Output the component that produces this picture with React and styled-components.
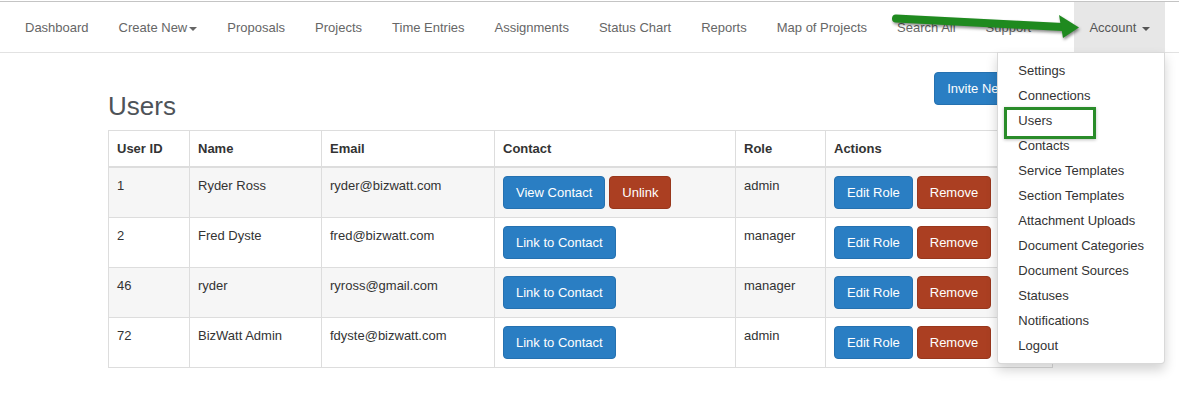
import React from "react";
import styled, { createGlobalStyle, css } from "styled-components";

const Global = createGlobalStyle`
  html, body { margin: 0; padding: 0; background: #fff; }
  body {
    font-family: "Liberation Sans", Arial, sans-serif;
    font-size: 13px;
    line-height: 1.42857;
    color: #333;
  }
  * { box-sizing: border-box; }
`;

const Page = styled.div`
  position: relative;
  width: 1179px;
  height: 396px;
  overflow: hidden;
`;

const Navbar = styled.nav`
  margin-top: 1px;
  border-top: 1px solid #c4c4c4;
  border-bottom: 1px solid #e2e2e2;
  height: 52px;
  display: flex;
  justify-content: space-between;
  background: #fff;
  position: relative;
  z-index: 5;
`;

const NavList = styled.ul`
  list-style: none;
  margin: 0;
  padding: 0;
  display: flex;
  margin-left: ${(p) => (p.$right ? "0" : "10px")};
  margin-right: ${(p) => (p.$right ? "14px" : "0")};
`;

const NavItem = styled.li`
  position: relative;
  background: ${(p) => (p.$open ? "#e7e7e7" : "transparent")};
`;

const NavLink = styled.a`
  display: block;
  padding: 16px 15px 14px;
  line-height: 20px;
  font-size: 13px;
  color: ${(p) => (p.$open ? "#555" : "#666")};
  text-decoration: none;
  white-space: nowrap;
`;

const Caret = styled.span`
  display: inline-block;
  width: 0;
  height: 0;
  margin-left: 2px;
  vertical-align: middle;
  border-top: 4px solid currentColor;
  border-left: 4px solid transparent;
  border-right: 4px solid transparent;
`;

const Dropdown = styled.ul`
  position: absolute;
  top: 100%;
  right: 0;
  list-style: none;
  margin: 0;
  padding: 5px 0;
  background: #fff;
  border: 1px solid rgba(0, 0, 0, 0.15);
  border-radius: 0 0 4px 4px;
  box-shadow: 0 6px 12px rgba(0, 0, 0, 0.175);
  white-space: nowrap;
`;

const DropItem = styled.li`
  position: relative;
  padding: 3px 20px;
  line-height: 19px;
  font-size: 13px;
  color: #333;
  ${(p) =>
    p.$marked &&
    css`
      &::after {
        content: "";
        position: absolute;
        left: 6px;
        top: -1px;
        width: 86px;
        height: 26px;
        border: 3px solid #2a8c2a;
        box-shadow: 0 1px 3px rgba(0, 0, 0, 0.25);
      }
    `}
`;

const Container = styled.main`
  margin-left: 108px;
  width: 944px;
  padding-top: 19px;
`;

const Header = styled.div`
  display: flex;
  justify-content: space-between;
  align-items: flex-start;
  margin-bottom: 10px;
`;

const Title = styled.h1`
  margin: 20px 0 0;
  font-size: 26px;
  line-height: 28px;
  font-weight: 400;
  color: #4e5358;
`;

const Button = styled.button`
  font-family: inherit;
  font-size: 13px;
  line-height: 19px;
  padding: 6px 12px;
  border-radius: 4px;
  color: #fff;
  cursor: pointer;
  white-space: nowrap;
  background: ${(p) => (p.$variant === "danger" ? "#ab3f22" : "#2a7ec3")};
  border: 1px solid ${(p) => (p.$variant === "danger" ? "#98371c" : "#2571b0")};
`;

const ButtonRow = styled.div`
  display: flex;
  gap: 4px;
`;

const Table = styled.table`
  width: 944px;
  border-collapse: collapse;
  table-layout: fixed;
  border: 1px solid #ddd;
`;

const Th = styled.th`
  text-align: left;
  padding: 9px 8px 7px;
  font-weight: 700;
  font-size: 13px;
  line-height: 18.5px;
  color: #333;
  border: 1px solid #ddd;
  border-bottom: 2px solid #ddd;
  width: ${(p) => p.$w}px;
`;

const Tr = styled.tr`
  background: ${(p) => (p.$striped ? "#f6f6f6" : "#fff")};
`;

const Td = styled.td`
  padding: 8px;
  vertical-align: top;
  font-size: 13px;
  line-height: 20px;
  color: #333;
  border: 1px solid #ddd;
  height: 50px;
`;

const ArrowSvg = styled.svg`
  position: absolute;
  left: 880px;
  top: 0;
  width: 210px;
  height: 50px;
  z-index: 10;
  pointer-events: none;
  filter: drop-shadow(1px 2px 1.5px rgba(0, 0, 0, 0.45));
`;

const navLeft = [
  { label: "Dashboard" },
  { label: "Create New", caret: true },
  { label: "Proposals" },
  { label: "Projects" },
  { label: "Time Entries" },
  { label: "Assignments" },
  { label: "Status Chart" },
  { label: "Reports" },
  { label: "Map of Projects" },
  { label: "Search All" },
  { label: "Support" },
];

const menu = [
  "Settings",
  "Connections",
  "Users",
  "Contacts",
  "Service Templates",
  "Section Templates",
  "Attachment Uploads",
  "Document Categories",
  "Document Sources",
  "Statuses",
  "Notifications",
  "Logout",
];

const users = [
  { id: "1", name: "Ryder Ross", email: "ryder@bizwatt.com", role: "admin", linked: true },
  { id: "2", name: "Fred Dyste", email: "fred@bizwatt.com", role: "manager" },
  { id: "46", name: "ryder", email: "ryross@gmail.com", role: "manager" },
  { id: "72", name: "BizWatt Admin", email: "fdyste@bizwatt.com", role: "admin" },
];

const cols = [
  ["User ID", 81],
  ["Name", 132],
  ["Email", 173],
  ["Contact", 241],
  ["Role", 90],
  ["Actions", 227],
];

export default function App() {
  return (
    <Page>
      <Global />
      <Navbar>
        <NavList>
          {navLeft.map((n) => (
            <NavItem key={n.label}>
              <NavLink>
                {n.label}
                {n.caret && <Caret />}
              </NavLink>
            </NavItem>
          ))}
        </NavList>
        <NavList $right>
          <NavItem $open>
            <NavLink $open>
              Account <Caret />
            </NavLink>
            <Dropdown>
              {menu.map((m) => (
                <DropItem key={m} $marked={m === "Users"}>
                  {m}
                </DropItem>
              ))}
            </Dropdown>
          </NavItem>
        </NavList>
      </Navbar>

      <Container>
        <Header>
          <Title>Users</Title>
          <Button>Invite New User</Button>
        </Header>
        <Table>
          <thead>
            <tr>
              {cols.map(([c, w]) => (
                <Th key={c} $w={w}>
                  {c}
                </Th>
              ))}
            </tr>
          </thead>
          <tbody>
            {users.map((u, i) => (
              <Tr key={u.id} $striped={i % 2 === 0}>
                <Td>{u.id}</Td>
                <Td>{u.name}</Td>
                <Td>{u.email}</Td>
                <Td>
                  <ButtonRow>
                    {u.linked ? (
                      <>
                        <Button>View Contact</Button>
                        <Button $variant="danger">Unlink</Button>
                      </>
                    ) : (
                      <Button>Link to Contact</Button>
                    )}
                  </ButtonRow>
                </Td>
                <Td>{u.role}</Td>
                <Td>
                  <ButtonRow>
                    <Button>Edit Role</Button>
                    <Button $variant="danger">Remove</Button>
                  </ButtonRow>
                </Td>
              </Tr>
            ))}
          </tbody>
        </Table>
      </Container>

      <ArrowSvg viewBox="880 0 210 50">
        <line x1="896" y1="18.5" x2="1063" y2="27" stroke="#1f8a1f" strokeWidth="8" strokeLinecap="round" />
        <polygon points="1059,15 1079,27.5 1063,38" fill="#1f8a1f" />
      </ArrowSvg>
    </Page>
  );
}
